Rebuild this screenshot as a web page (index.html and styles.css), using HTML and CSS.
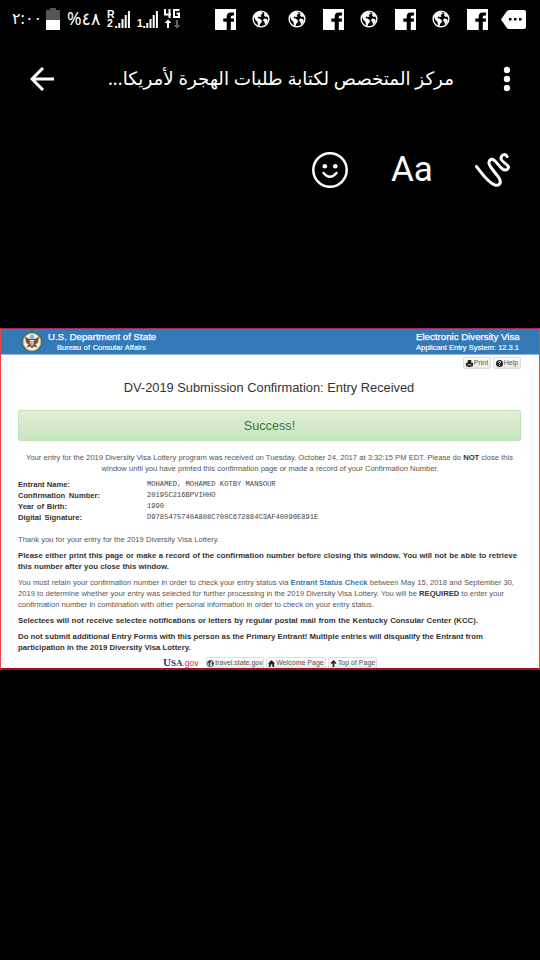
FILE: index.html
```
<!DOCTYPE html>
<html lang="ar">
<head>
<meta charset="utf-8">
<title>Story viewer</title>
<link rel="stylesheet" href="styles.css">
</head>
<body>
<svg class="defs" width="0" height="0" aria-hidden="true">
  <symbol id="fb" viewBox="0 0 21 21"><path fill="#fff" d="M0 0h21v21H0z"/><path fill="#000" d="M11.700 21v-8.300H8.300V9.500h3.400V7.600q0-4.200 4.200-4.200h3.100v3.200h-1.700q-1.500 0-1.500 1.500v1.400h3.300l-.4 3.200h-2.900V21z"/></symbol>
  <symbol id="globe" viewBox="0 0 18 18"><circle cx="9" cy="9" r="7.900" fill="#000" stroke="#fff" stroke-width="1.400"/><path fill="#fff" d="M2 5.500L5 2.500l3.500-1L11 3 9.500 4.500l-1 .5 1 1.500L8 7l-1.500-.5-1 1.500 2 .5 2.500 2-.5 2-1.500 1.500-.5 2.500-1.500-1.500-.5-3-2-2L2.500 8zM11.500 2.500l3 1 1.800 4-1.800-1-1 .5-1.500-1.500.5-1zM12 8.500l3 .5 1 2-1.500 2.500-1.500 1-.5-2.500-1.500-1.500z"/></symbol>
  <symbol id="bars" viewBox="0 0 15 17"><path stroke="#fff" stroke-width="2" d="M1.200 17v-2M4.300 17v-5M7.500 17V8M10.700 17V4M13.900 17V0"/></symbol>
</svg>
<main class="screen">
  <header class="status">
    <span class="clock">٢:٠٠</span>
    <svg class="battery" viewBox="0 0 14 22"><path fill="#555" d="M4 0h6v2h4v10H0V2h4z"/><path fill="#fff" d="M0 12h14v10H0z"/></svg>
    <span class="percent" dir="ltr">%٤٨</span>
    <span class="roam"><b>R</b><b>2</b></span>
    <svg class="bars"><use href="#bars"/></svg>
    <b class="sim">1</b>
    <svg class="bars"><use href="#bars"/></svg>
    <svg class="fourg" viewBox="0 0 16 20"><path fill="none" stroke="#fff" stroke-width="2" d="M1 0v5.500h6M5.500 0v9M15.500 1H10v7h5V4.500h-2.500"/><path fill="#fff" d="M4 10.500L7.500 14H5v5H3v-5H.5z"/><path fill="#666" d="M13 19.800L9.800 16H12v-5h2v5h2.200z"/></svg>
    <div class="notices">
      <div><svg class="fb"><use href="#fb"/></svg></div><div><svg class="globe"><use href="#globe"/></svg></div><div><svg class="globe"><use href="#globe"/></svg></div><div><svg class="fb"><use href="#fb"/></svg></div><div><svg class="globe"><use href="#globe"/></svg></div><div><svg class="fb"><use href="#fb"/></svg></div><div><svg class="globe"><use href="#globe"/></svg></div><div><svg class="fb"><use href="#fb"/></svg></div>
      <svg class="more" viewBox="0 0 25 19"><path fill="#fff" d="M0 9.500L5.500 1.500Q6.500 0 8.500 0H23q2 0 2 2v15q0 2-2 2H8.500q-2 0-3-1.500z"/><path d="M8 8h2.500v2.500H8zM13 8h2.500v2.500H13zM18 8h2.500v2.500H18z"/></svg>
    </div>
  </header>
  <nav class="bar">
    <svg class="back" viewBox="0 0 24 24"><path fill="none" stroke="#fff" stroke-width="3" d="M13 1L2 12l11 11M2 12h22"/></svg>
    <h1 dir="rtl">مركز المتخصص لكتابة طلبات الهجرة لأمريكا...</h1>
    <svg class="dots" viewBox="0 0 8 26"><g fill="#fff"><circle cx="4" cy="4" r="3.200"/><circle cx="4" cy="13" r="3.200"/><circle cx="4" cy="22" r="3.200"/></g></svg>
  </nav>
  <div class="tools">
    <svg class="smile" viewBox="0 0 36 36"><circle cx="18" cy="18" r="16.700" fill="none" stroke="#fff" stroke-width="2.500"/><circle cx="12.800" cy="14.200" r="2.300" fill="#fff"/><circle cx="23.300" cy="14.200" r="2.300" fill="#fff"/><path fill="none" stroke="#fff" stroke-width="2.500" stroke-linecap="round" d="M11.500 21q6.500 7.500 13 0"/></svg>
    <span class="aa">Aa</span>
    <svg class="scribble" viewBox="0 0 36 36"><path fill="none" stroke="#fff" stroke-width="3" stroke-linecap="round" stroke-linejoin="round" d="M1.500 14.500C6 20.500 13 31 20 33C24.500 34 26.500 31 24.500 27C22.500 22 12.500 14 14 10C15 6.500 18 6.500 20.500 9.500C24 13 28 20 32 17.500C37.500 13 25 10.500 26 6C27 1.500 31 2 32 4.500"/></svg>
  </div>
  <article class="page" lang="en" dir="ltr">
    <header class="agency">
      <svg class="seal" viewBox="0 0 22 22"><circle cx="11" cy="11" r="10.600" fill="#3d6f6c"/><circle cx="11" cy="11" r="8.800" fill="#efe9cf" stroke="#b9b98d" stroke-width=".7"/><circle cx="11" cy="11" r="7.600" fill="#f5f3e8"/><path fill="#79512f" d="M4 5.500l4 2.500 3-1 3 1 4-2.500-1 6-2.500 2 2 3-4-1-1.500 2-1.500-2-4 1 2-3L5 11.500z"/><circle cx="11" cy="6" r="2.300" fill="#7fbad9"/><path fill="#e7e7ef" d="M9 9h4v4l-2 2-2-2z"/><path stroke="#b4393d" stroke-width=".7" d="M10.200 10v4M12 10v4"/></svg>
      <div class="dept"><div class="big w107">U.S. Department of State</div><div class="small w89">Bureau of Consular Affairs</div></div>
      <div class="system"><div class="big w103">Electronic Diversity Visa</div><div class="small w103">Applicant Entry System: 12.3.1</div></div>
    </header>
    <div class="actions">
      <span class="btn print"><svg viewBox="0 0 8 8"><path fill="#222" d="M2 0h4v3h2v4H6V5H2v2H0V3h2zM2 6h4v2H2z"/></svg>Print</span>
      <span class="btn help"><svg viewBox="0 0 8 8"><circle cx="4" cy="4" r="4" fill="#222"/><path fill="none" stroke="#fff" d="M2.600 3q.2-1.400 1.500-1.300 1.500.2 1.200 1.300L4 4.300V5M4 5.800v1"/></svg>Help</span>
    </div>
    <h2>DV-2019 Submission Confirmation: Entry Received</h2>
    <div class="success">Success!</div>
    <div class="intro"><div class="line w487">Your entry for the 2019 Diversity Visa Lottery program was received on Tuesday, October 24, 2017 at 3:32:15 PM EDT. Please do <b>NOT</b> close this</div><div class="line w336">window until you have printed this confirmation page or made a record of your Confirmation Number.</div></div>
    <dl>
      <dt class="k52">Entrant Name:</dt><dd>MOHAMED, MOHAMED KOTBY MANSOUR</dd>
      <dt class="k82">Confirmation Number:</dt><dd>20195C216BPVIHHO</dd>
      <dt class="k49">Year of Birth:</dt><dd>1990</dd>
      <dt class="k64">Digital Signature:</dt><dd>D9785475740A808C700C672884C3AF40090E891E</dd>
    </dl>
    <div class="para"><div class="line w201">Thank you for your entry for the 2019 Diversity Visa Lottery.</div></div>
    <div class="para strong"><div class="line w499">Please either print this page or make a record of the confirmation number before closing this window. You will not be able to retrieve</div><div class="line w151">this number after you close this window.</div></div>
    <div class="para"><div class="line w496">You must retain your confirmation number in order to check your entry status via <b class="link">Entrant Status Check</b> between May 15, 2018 and September 30,</div><div class="line w486">2019 to determine whether your entry was selected for further processing in the 2019 Diversity Visa Lottery. You will be <b>REQUIRED</b> to enter your</div><div class="line w356">confirmation number in combination with other personal information in order to check on your entry status.</div></div>
    <div class="para strong"><div class="line w460">Selectees will not receive selectee notifications or letters by regular postal mail from the Kentucky Consular Center (KCC).</div></div>
    <div class="para strong"><div class="line w464">Do not submit additional Entry Forms with this person as the Primary Entrant! Multiple entries will disqualify the Entrant from</div><div class="line w172">participation in the 2019 Diversity Visa Lottery.</div></div>
    <footer>
      <span class="usa"><span class="u">U</span><span class="sa">SA</span><span class="gov">.gov</span></span>
      <span class="btn travel"><svg viewBox="0 0 8 8"><circle cx="4" cy="4" r="3.500" fill="#fff" stroke="#222"/><path fill="#222" d="M1 2l3-1 1 1-2 2 1 1-1 2-1-3zM6 2l1 2-1 2-1-2z"/></svg>travel.state.gov</span>
      <span class="btn welcome"><svg viewBox="0 0 8 8"><path fill="#222" d="M4 0l4 4H7v4H5V5H3v3H1V4H0z"/></svg>Welcome Page</span>
      <span class="btn top"><svg viewBox="0 0 8 8"><path fill="#222" d="M4 0l3.500 3.500L6 4.500 5 3.500V8H3V3.500l-1 1-1.500-1z"/></svg>Top of Page</span>
    </footer>
    <div class="edge"></div>
  </article>
</main>
</body>
</html>
```
FILE: styles.css
```
* { box-sizing: border-box; }
body { margin: 0; background: #000; }
.defs { position: absolute; }
svg { display: block; flex: none; }
.screen { width: 540px; height: 960px; background: #000; color: #fff; overflow: hidden; font-family: "Noto Sans", "DejaVu Sans", sans-serif; }

.status { display: flex; align-items: center; height: 38px; padding: 0 14px 0 12px; }
.clock { width: 27px; margin-right: 7px; font-size: 16px; letter-spacing: -1.200px; line-height: 20px; margin-top: -3px; white-space: nowrap; }
.battery { width: 14px; height: 22px; }
.percent { width: 34px; margin-left: 7px; font-size: 17.500px; line-height: 20px; margin-top: -2px; white-space: nowrap; }
.roam { display: flex; flex-direction: column; width: 7px; margin: 0 1px 0 6px; font: bold 10.500px/9px "Liberation Sans", sans-serif; }
.bars { width: 15px; height: 17px; }
.sim { width: 5px; margin: 8px 1px 0 7px; font: bold 10.500px/10px "Liberation Sans", sans-serif; }
.fourg { width: 16px; height: 20px; margin-left: 6px; }
.notices { display: flex; align-items: center; margin-left: auto; }
.notices div { display: flex; justify-content: center; width: 36px; }
.fb { width: 21px; height: 21px; }
.globe { width: 18px; height: 18px; }
.more { width: 25px; height: 19px; margin-left: 6px; }

.bar { display: flex; align-items: center; height: 82px; padding: 0 29px 0 30px; }
.back { width: 24px; height: 24px; }
.bar h1 { flex: 1; margin: -2px 49px 0 0; font-size: 18.300px; font-weight: 400; line-height: 30px; white-space: nowrap; }
.dots { width: 8px; height: 26px; }

.tools { display: flex; align-items: center; height: 100px; padding: 0 29px 0 312px; }
.smile { width: 36px; height: 36px; }
.aa { width: 42px; margin-left: 43px; font: 35px/40px Roboto, sans-serif; }
.scribble { width: 36px; height: 36px; margin-left: auto; }

.page { height: 342px; margin-top: 108px; display: flex; flex-direction: column; overflow: hidden; border: 1px solid #f04348; border-top-color: #a42d57; border-bottom: 2px solid #9b1519; background: #fff; color: #555; font: 7.600px/11px "Liberation Sans", sans-serif; }
.agency { display: flex; height: 26px; flex: none; padding: 1px 20px 0 20px; background: #337ab7; color: #fff; border-bottom: 1px solid #8fb8dc; }
.seal { width: 22px; height: 22px; margin-top: 1px; }
.dept { margin-left: 5px; }
.dept .small { margin-left: 9px; }
.system { margin-left: auto; }
.agency div { white-space: nowrap; }
.big { font-size: 9.700px; line-height: 13px; text-align-last: justify; -webkit-text-stroke: .25px #fff; }
.small { font-size: 7.500px; line-height: 9px; text-align-last: justify; -webkit-text-stroke: .15px #fff; }
.w107 { width: 107px; } .w89 { width: 89px; } .w103 { width: 103px; }

.actions { display: flex; justify-content: flex-end; gap: 2px; height: 15px; padding: 2px 18px 0 0; flex: none; }
.btn { display: flex; align-items: center; justify-content: center; gap: 1px; height: 12px; border: 1px solid #ddd; border-radius: 2px; background: linear-gradient(#fff, #e7e7e7); font-size: 7px; line-height: 10px; white-space: nowrap; }
.btn svg { width: 7px; height: 7px; }
.print, .help { width: 28px; }
.page h2 { flex: none; margin: 9px 2px 0 0; font-size: 12.850px; font-weight: 400; line-height: 18px; text-align: center; color: #333; }
.success { flex: none; height: 31px; margin: 13px 18px 0 17px; border: 1px solid #c3e0b7; border-radius: 2px; background: linear-gradient(#dff0d8, #c8e5bc); color: #3c763d; font-size: 12.700px; line-height: 30px; text-align: center; }
.intro { flex: none; margin: 11px 1px 0 0; display: flex; flex-direction: column; align-items: center; }
.line { white-space: nowrap; text-align-last: justify; }
.line b, .strong, dt { color: #333; font-weight: 700; }
.strong { font-size: 7.800px; }
.page .link { color: #337ab7; }
dl { flex: none; display: grid; grid-template-columns: 129px auto; grid-auto-rows: 11.100px; margin: 5px 0 0 17px; }
dt { text-align-last: justify; white-space: nowrap; }
dd { margin: 0; color: #444; font: 7.150px/11px "Liberation Mono", monospace; white-space: nowrap; }
.para { flex: none; margin: 5px 0 0 17px; }
dl + .para { margin-top: 11px; }
.k52 { width: 52px; } .k82 { width: 82px; } .k49 { width: 49px; } .k64 { width: 64px; }
.w487 { width: 487px; } .w336 { width: 336px; } .w201 { width: 201px; } .w499 { width: 499px; } .w151 { width: 151px; }
.w496 { width: 496px; } .w486 { width: 486px; } .w356 { width: 356px; } .w460 { width: 460px; } .w464 { width: 464px; } .w172 { width: 172px; }
footer { flex: none; display: flex; gap: 2px; height: 11px; margin: 4px 0 0 162px; overflow: hidden; }
.usa { display: flex; align-items: baseline; width: 41px; height: 11px; white-space: nowrap; color: #273768; font: bold 9px/10px "Liberation Serif", serif; }
.u { font-size: 11px; }
.gov { color: #c43455; font: 8.500px/10px "Liberation Sans", sans-serif; }
.travel { width: 58px; } .welcome { width: 60px; } .top { width: 49px; }
.edge { margin-top: auto; height: 2px; flex: none; background: linear-gradient(90deg, #335565 0 32px, #acb8bc 32px 98px, #466879 98px 160px, #829da7 160px); }
```
